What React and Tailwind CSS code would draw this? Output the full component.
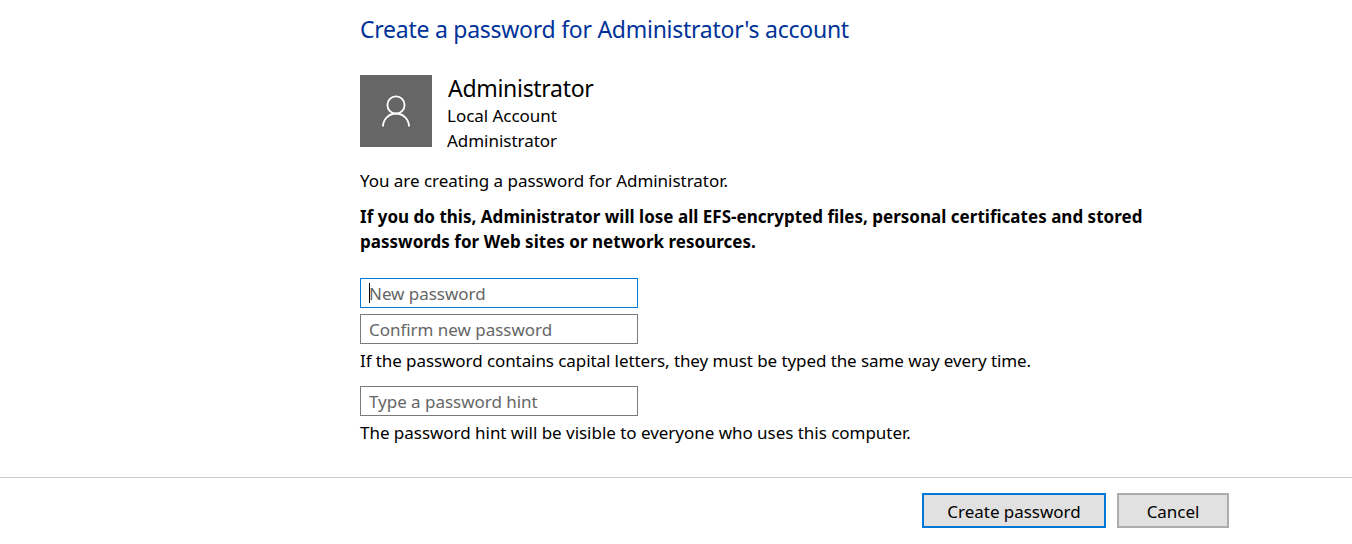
const font = { fontFamily: '"Noto Sans", sans-serif' };

function Field({ placeholder, focused }) {
  return (
    <div
      className={`relative h-[30px] w-[278px] border bg-white ${
        focused ? "border-[#0078d7]" : "border-[#7a7a7a]"
      }`}
    >
      <input
        readOnly
        placeholder={placeholder}
        className="h-full w-full px-2 text-[17px] tracking-[-0.03px] text-black outline-none placeholder:text-[#666666]"
      />
      {focused && <span className="absolute left-2 top-[4px] h-5 w-px bg-black" />}
    </div>
  );
}

export default function App() {
  return (
    <div
      className="flex h-[544px] w-[1352px] flex-col overflow-hidden bg-white text-black"
      style={font}
    >
      <div className="h-[477px] pl-[360px]">
        <h1 className="pt-[12px] text-[23px] leading-[34px] tracking-[-0.26px] text-[#003399]">
          Create a password for Administrator's account
        </h1>

        <div className="mt-[29px] flex">
          <div className="flex h-[72px] w-[72px] items-center justify-center bg-[#666666]">
            <svg width="30" height="32" viewBox="0 0 30 32" fill="none" stroke="white" strokeWidth="1.8">
              <circle cx="15" cy="10" r="8.6" />
              <path d="M2 31.5a13 13 0 0 1 26 0" />
            </svg>
          </div>
          <div className="ml-[15px] flex flex-col">
            <div className="ml-px text-[23px] leading-[26px] tracking-[-0.3px]">Administrator</div>
            <div className="mt-[2px] text-[17px] leading-[25px] tracking-[-0.03px]">Local Account</div>
            <div className="text-[17px] leading-[25px] tracking-[-0.03px]">Administrator</div>
          </div>
        </div>

        <p className="mt-[15px] text-[17px] leading-[25px] tracking-[-0.03px]">
          You are creating a password for Administrator.
        </p>
        <p className="mt-[11px] w-[820px] text-[17px] font-bold leading-[25px] tracking-[0.02px]">
          If you do this, Administrator will lose all EFS-encrypted files, personal certificates and stored
          passwords for Web sites or network resources.
        </p>

        <div className="mt-[24px] flex flex-col gap-[6px]">
          <Field placeholder="New password" focused />
          <Field placeholder="Confirm new password" />
        </div>
        <p className="mt-[4px] text-[17px] leading-[25px] tracking-[-0.08px]">
          If the password contains capital letters, they must be typed the same way every time.
        </p>
        <div className="mt-[13px]">
          <Field placeholder="Type a password hint" />
        </div>
        <p className="mt-[4px] text-[17px] leading-[25px] tracking-[-0.03px]">
          The password hint will be visible to everyone who uses this computer.
        </p>
      </div>

      <div className="flex justify-end gap-[11px] border-t border-[#cccccc] pr-[123px] pt-[15px]">
        <button className="h-[35px] w-[184px] border-2 border-[#0078d7] bg-[#e1e1e1] pt-[2px] text-[17px] tracking-[-0.03px] text-black">
          Create password
        </button>
        <button className="h-[35px] w-[112px] border-2 border-[#adadad] bg-[#e1e1e1] pt-[2px] text-[17px] tracking-[-0.03px] text-black">
          Cancel
        </button>
      </div>
    </div>
  );
}
